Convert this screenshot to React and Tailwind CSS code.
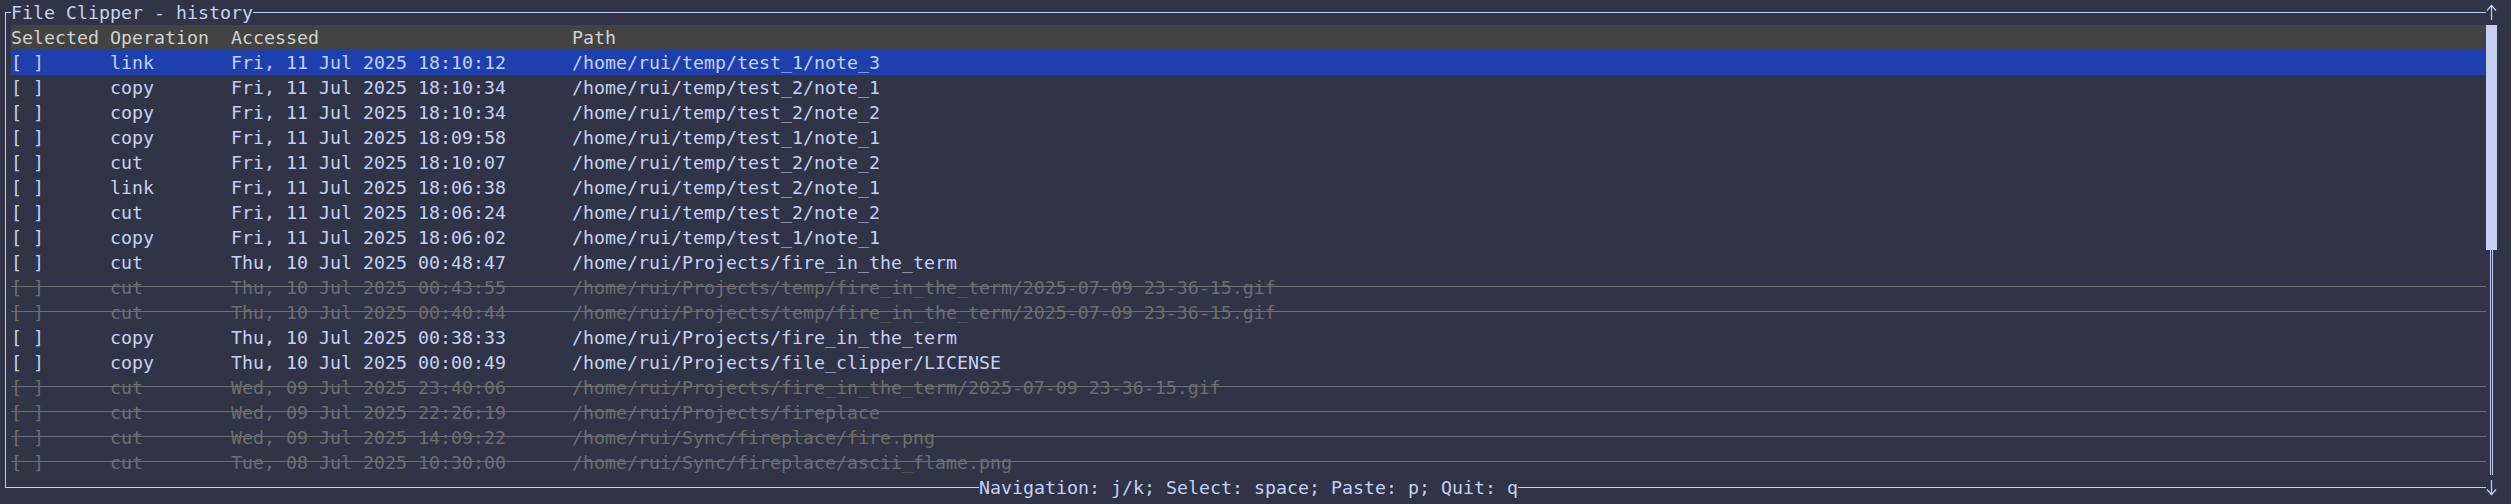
import React from "react";

const rows = [
  ["link", "Fri, 11 Jul 2025 18:10:12", "/home/rui/temp/test_1/note_3", false],
  ["copy", "Fri, 11 Jul 2025 18:10:34", "/home/rui/temp/test_2/note_1", false],
  ["copy", "Fri, 11 Jul 2025 18:10:34", "/home/rui/temp/test_2/note_2", false],
  ["copy", "Fri, 11 Jul 2025 18:09:58", "/home/rui/temp/test_1/note_1", false],
  ["cut", "Fri, 11 Jul 2025 18:10:07", "/home/rui/temp/test_2/note_2", false],
  ["link", "Fri, 11 Jul 2025 18:06:38", "/home/rui/temp/test_2/note_1", false],
  ["cut", "Fri, 11 Jul 2025 18:06:24", "/home/rui/temp/test_2/note_2", false],
  ["copy", "Fri, 11 Jul 2025 18:06:02", "/home/rui/temp/test_1/note_1", false],
  ["cut", "Thu, 10 Jul 2025 00:48:47", "/home/rui/Projects/fire_in_the_term", false],
  ["cut", "Thu, 10 Jul 2025 00:43:55", "/home/rui/Projects/temp/fire_in_the_term/2025-07-09 23-36-15.gif", true],
  ["cut", "Thu, 10 Jul 2025 00:40:44", "/home/rui/Projects/temp/fire_in_the_term/2025-07-09 23-36-15.gif", true],
  ["copy", "Thu, 10 Jul 2025 00:38:33", "/home/rui/Projects/fire_in_the_term", false],
  ["copy", "Thu, 10 Jul 2025 00:00:49", "/home/rui/Projects/file_clipper/LICENSE", false],
  ["cut", "Wed, 09 Jul 2025 23:40:06", "/home/rui/Projects/fire_in_the_term/2025-07-09 23-36-15.gif", true],
  ["cut", "Wed, 09 Jul 2025 22:26:19", "/home/rui/Projects/fireplace", true],
  ["cut", "Wed, 09 Jul 2025 14:09:22", "/home/rui/Sync/fireplace/fire.png", true],
  ["cut", "Tue, 08 Jul 2025 10:30:00", "/home/rui/Sync/fireplace/ascii_flame.png", true],
];

function Row({ op, date, path, gone, active }) {
  const color = gone ? "text-[#6e6e6e]" : "text-[#c6d0f5]";
  return (
    <div className={`relative flex h-[25px] whitespace-pre ${active ? "bg-[#1e40af]" : ""} ${color}`}>
      <div className="w-[99px]">[ ]</div>
      <div className="w-[121px]">{op}</div>
      <div className="w-[341px]">{date}</div>
      <div className="flex-1">{path}</div>
      {/* crossed-out rows: the terminal strikes the whole line, spaces included */}
      {gone && <div className="absolute left-0 right-0 top-[11px] h-px bg-[#6e6e6e]" />}
    </div>
  );
}

export default function App() {
  return (
    <div className="flex w-[2511px] h-[504px] bg-[#303446] font-['DejaVu_Sans_Mono',monospace] text-[18.27px] leading-[25px] text-[#c6d0f5]">
      {/* left border */}
      <div className="w-[11px] pt-[12px]">
        <div className="ml-[5px] w-[6px] h-[476px] border-l border-t border-b border-[#c6d0f5]" />
      </div>

      {/* table */}
      <div className="w-[2475px] flex flex-col">
        <div className="flex h-[25px] whitespace-pre">
          <span>File Clipper - history</span>
          <div className="flex-1 mt-[12px] h-px bg-[#c6d0f5]" />
        </div>
        <div className="flex h-[25px] bg-[#434343] text-[#d2d2d2] whitespace-pre">
          <div className="w-[99px]">Selected</div>
          <div className="w-[121px]">Operation</div>
          <div className="w-[341px]">Accessed</div>
          <div className="flex-1">Path</div>
        </div>
        {rows.map(([op, date, path, gone], i) => (
          <Row key={i} op={op} date={date} path={path} gone={gone} active={i === 0} />
        ))}
        <div className="flex h-[25px] whitespace-pre">
          <div className="flex-1 mt-[12px] h-px bg-[#c6d0f5]" />
          <span>Navigation: j/k; Select: space; Paste: p; Quit: q</span>
          <div className="flex-1 mt-[12px] h-px bg-[#c6d0f5]" />
        </div>
      </div>

      {/* scrollbar */}
      <div className="w-[11px] flex flex-col">
        <div className="h-[25px]">
          <svg width="11" height="25" viewBox="0 0 11 25" fill="none" stroke="#c6d0f5" strokeWidth="1.2">
            <path d="M5.5 5.5V20" />
            <path d="M1 10.5L5.5 5.5L10 10.5" />
          </svg>
        </div>
        <div className="h-[225px] bg-[#c6d0f5]" />
        <div className="h-[225px] flex gap-px pl-[4px]">
          <div className="w-px bg-[#c6d0f5]" />
          <div className="w-px bg-[#c6d0f5]" />
        </div>
        <div className="h-[25px]">
          <svg width="11" height="25" viewBox="0 0 11 25" fill="none" stroke="#c6d0f5" strokeWidth="1.2">
            <path d="M5.5 5V19.5" />
            <path d="M1 14.5L5.5 19.5L10 14.5" />
          </svg>
        </div>
      </div>
    </div>
  );
}
